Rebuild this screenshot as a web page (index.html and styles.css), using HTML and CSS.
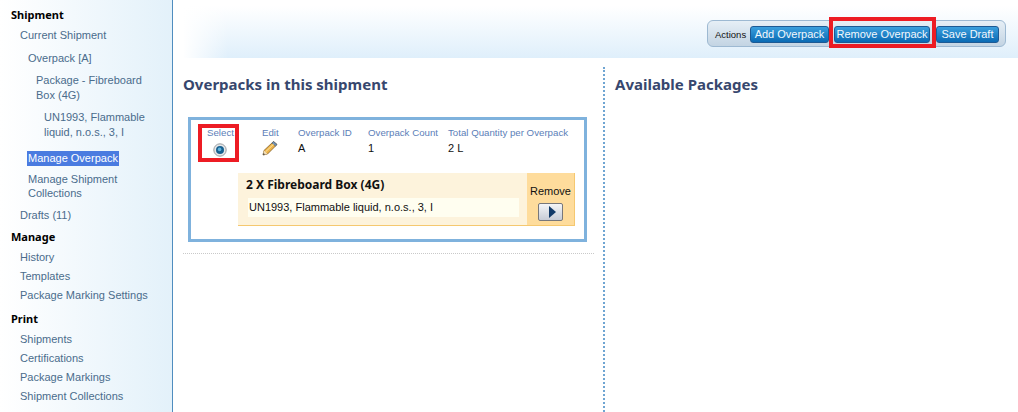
FILE: index.html
```html
<!DOCTYPE html>
<html lang="en">
<head>
  <meta charset="UTF-8" />
  <title>Manage Overpack</title>
  <link rel="stylesheet" href="styles.css">
</head>
<body>

  <div class="sidebar">
    <h3 class="nav-title first">Shipment</h3>
    <a class="nav-link lvl1 first-link">Current Shipment</a>
    <a class="nav-link lvl2">Overpack [A]</a>
    <a class="nav-link lvl3">Package - Fibreboard Box (4G)</a>
    <a class="nav-link lvl4">UN1993, Flammable liquid, n.o.s., 3, I</a>
    <a class="nav-link lvl2 current"><span>Manage Overpack</span></a>
    <a class="nav-link lvl2 collections">Manage Shipment Collections</a>
    <a class="nav-link lvl1 drafts">Drafts (11)</a>
    <h3 class="nav-title">Manage</h3>
    <a class="nav-link lvl1 first-link">History</a>
    <a class="nav-link lvl1">Templates</a>
    <a class="nav-link lvl1">Package Marking Settings</a>
    <h3 class="nav-title print">Print</h3>
    <a class="nav-link lvl1 first-link">Shipments</a>
    <a class="nav-link lvl1">Certifications</a>
    <a class="nav-link lvl1">Package Markings</a>
    <a class="nav-link lvl1">Shipment Collections</a>
  </div>

  <div class="main">
    <div class="header">
      <div class="actions">
        <span class="actions-label">Actions</span>
        <button class="btn btn-add">Add Overpack</button>
        <button class="btn btn-remove">Remove Overpack</button>
        <button class="btn btn-save">Save Draft</button>
        <div class="callout callout-remove"></div>
      </div>
    </div>

    <div class="columns">
      <div class="col-left">
        <h2 class="col-title">Overpacks in this shipment</h2>
        <div class="card">
          <div class="card-row">
            <div class="field f-select">
              <div class="field-label">Select</div>
              <svg class="radio" width="14" height="14" viewBox="0 0 14 14">
                <circle cx="7" cy="7" r="6.2" fill="#e4e6e8" stroke="#9a9ea2"/>
                <circle cx="7" cy="7" r="4" fill="#17608f"/>
                <circle cx="6.6" cy="6.4" r="1.8" fill="#5fb4de"/>
              </svg>
              <div class="callout callout-select"></div>
            </div>
            <div class="field f-edit">
              <div class="field-label">Edit</div>
              <svg class="pencil" width="16" height="16" viewBox="0 0 16 16">
                <path d="M1 15 L2 10.5 L11.5 1.5 L15 4.5 L5.5 14 Z" fill="#eeb44a" stroke="#7d5a24" stroke-width="0.8"/>
                <path d="M11.5 1.5 L15 4.5 L13.4 6.1 L9.9 3 Z" fill="#6d8fb5" stroke="#3e5877" stroke-width="0.5"/>
                <path d="M1 15 L2 10.5 L5.5 14 Z" fill="#f3dfb9"/>
                <path d="M1 15 L1.5 13 L3 14.5 Z" fill="#333"/>
                <path d="M3.6 11.8 L11.6 4.2" stroke="#fbe6a8" stroke-width="1"/>
              </svg>
            </div>
            <div class="field f-id">
              <div class="field-label">Overpack ID</div>
              <div class="field-value">A</div>
            </div>
            <div class="field f-count">
              <div class="field-label">Overpack Count</div>
              <div class="field-value">1</div>
            </div>
            <div class="field f-qty">
              <div class="field-label">Total Quantity per Overpack</div>
              <div class="field-value">2 L</div>
            </div>
          </div>
          <div class="package">
            <div class="package-body">
              <div class="package-title">2 X Fibreboard Box (4G)</div>
              <div class="package-item">UN1993, Flammable liquid, n.o.s., 3, I</div>
            </div>
            <div class="package-remove">
              <div class="remove-label">Remove</div>
              <button class="play-btn">
                <svg width="8" height="12" viewBox="0 0 8 12"><path d="M1 0 L8 6 L1 12 Z" fill="#123a68"/></svg>
              </button>
            </div>
          </div>
        </div>
        <div class="rule"></div>
      </div>
      <div class="col-right">
        <h2 class="col-title">Available Packages</h2>
      </div>
    </div>
  </div>

</body>
</html>
```

FILE: styles.css
```css
* {
  box-sizing: border-box;
}

html, body {
  height: 100%;
}

body {
  font-family: "Liberation Sans", Arial, sans-serif;
  font-size: 11px;
  margin: 0;
  padding: 0;
  display: flex;
  height: 412px;
  overflow: hidden;
  background: #fff;
  color: #111;
}

.sidebar {
  width: 173px;
  flex: none;
  border-right: 1px solid #4f8dbf;
  background: linear-gradient(to right, #ffffff, #e3f1fa);
  padding: 7px 20px 0 11px;
}

.nav-title {
  margin: 6px 0 0;
  font-family: "Noto Sans", sans-serif;
  font-size: 11px;
  line-height: 15px;
  font-weight: bold;
  color: #000;
}

.nav-title.first {
  margin-top: 0;
}

.nav-title.print {
  margin-top: 8px;
}

.nav-link {
  display: block;
  line-height: 15px;
  color: #4a6c8c;
  margin-top: 4px;
}

.first-link {
  margin-top: 6px;
}

.lvl1 { margin-left: 9px; }
.lvl2 { margin-left: 17px; margin-top: 8px; }
.lvl3 { margin-left: 25px; margin-top: 7px; }
.lvl4 { margin-left: 33px; margin-top: 7px; }

.current {
  margin-top: 11px;
}

.current span {
  display: inline-block;
  background: #4a7be0;
  color: #fff;
  padding: 0 1px;
  margin-left: -1px;
}

.collections {
  margin-top: 6px;
  line-height: 14px;
}

.drafts {
  margin-top: 8px;
}

.main {
  flex: 1;
  min-width: 0;
  display: flex;
  flex-direction: column;
}

.header {
  height: 58px;
  flex: none;
  background:
    linear-gradient(to right, #fff 10px, rgba(255,255,255,0) 55px),
    linear-gradient(to bottom, #fff 10%, #dfeffb 100%);
  display: flex;
  justify-content: flex-end;
  padding: 20px 12px 0 0;
}

.actions {
  position: relative;
  width: 299px;
  height: 27px;
  border: 1px solid #9db9d2;
  border-radius: 6px;
  background: linear-gradient(to bottom, #e6eff6, #c3d4e3);
  display: flex;
  align-items: flex-start;
  padding: 5px 0 0 7px;
}

.actions-label {
  font-size: 9.5px;
  line-height: 17px;
  width: 35px;
  flex: none;
  color: #111;
}

.btn {
  font-family: inherit;
  font-size: 11px;
  height: 17px;
  line-height: 13px;
  padding: 0 0 1px;
  color: #f2f8fd;
  border: 1px solid #1d5a94;
  border-radius: 3px;
  background: linear-gradient(to bottom, #3a9fdd, #0a6ab4);
}

.btn-add { width: 79px; }
.btn-remove { width: 96px; margin-left: 5px; }
.btn-save { width: 63px; margin-left: 6px; }

.callout {
  position: absolute;
  border: 4px solid #ed1c24;
}

.callout-remove {
  left: 121px;
  top: -4px;
  width: 107px;
  height: 31px;
}

.columns {
  flex: 1;
  display: flex;
  min-height: 0;
}

.col-left {
  width: 430px;
  flex: none;
  padding: 17px 10px 0 10px;
}

.col-right {
  flex: 1;
  border-left: 2px dotted #6fa5d2;
  margin-top: 9px;
  padding: 8px 0 0 10px;
}

.col-title {
  margin: 0;
  font-family: "Noto Sans", sans-serif;
  font-size: 15px;
  line-height: 18px;
  font-weight: bold;
  color: #37476e;
}

.card {
  margin: 24px 7px 0 5px;
  width: 399px;
  height: 125px;
  border: 3px solid #7fb2dd;
  padding: 6px 0 0 0;
}

.card-row {
  display: flex;
  height: 47px;
}

.field {
  flex: none;
  position: relative;
}

.f-select { width: 71px; padding-left: 16px; }
.f-edit { width: 36px; }
.f-id { width: 70px; }
.f-count { width: 80px; }
.f-qty { width: 130px; }

.field-label {
  font-size: 9.7px;
  line-height: 14px;
  color: #5c80b8;
  white-space: nowrap;
}

.field-value {
  margin-top: 1px;
  font-size: 11px;
  line-height: 15px;
  color: #111;
}

.radio {
  display: block;
  margin: 3px 0 0 6px;
}

.pencil {
  display: block;
}

.callout-select {
  left: 7px;
  top: -2px;
  width: 41px;
  height: 38px;
}

.package {
  display: flex;
  margin: 0 0 0 47px;
  width: 337px;
  height: 53px;
  background: #fdf3dc;
  border-bottom: 1px solid #f5c870;
}

.package-body {
  flex: 1;
  padding: 4px 8px 0 8px;
}

.package-title {
  font-family: "Noto Sans", sans-serif;
  font-size: 12px;
  line-height: 16px;
  font-weight: bold;
  color: #111;
  padding-bottom: 5px;
}

.package-item {
  background: #fffef0;
  height: 19px;
  line-height: 19px;
  padding-left: 1px;
  margin-left: 2px;
}

.package-remove {
  width: 48px;
  flex: none;
  background: #fedc9c;
  border-right: 1px solid #f5c870;
  text-align: center;
  padding-top: 11px;
}

.remove-label {
  line-height: 15px;
}

.play-btn {
  width: 25px;
  height: 18px;
  margin: 4px auto 0;
  padding: 0 0 0 2px;
  border: 1px solid #77777b;
  border-radius: 2px;
  background: linear-gradient(to bottom, #f4f5f7, #c7ccd6);
  display: flex;
  align-items: center;
  justify-content: center;
}

.rule {
  margin-top: 11px;
  border-top: 1px dotted #c9c9c9;
  width: 411px;
}
```
